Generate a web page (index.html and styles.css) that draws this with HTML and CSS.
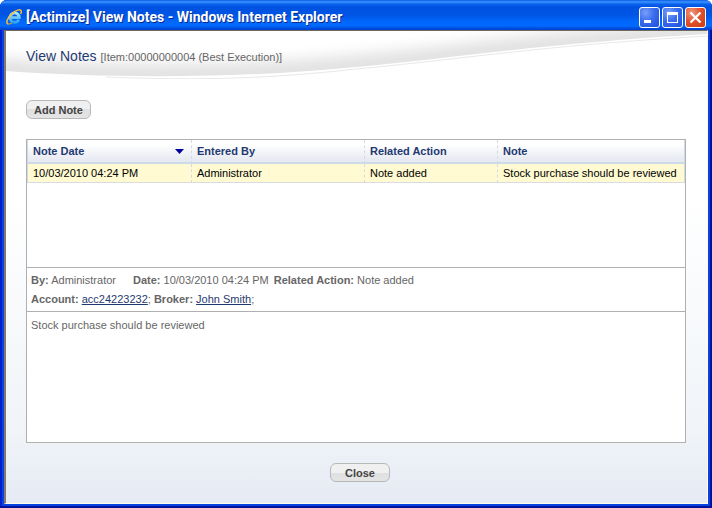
FILE: index.html
```html
<!DOCTYPE html>
<html lang="en">
<head>
<meta charset="utf-8">
<title>[Actimize] View Notes</title>
<link rel="stylesheet" href="styles.css">
</head>
<body>
<div class="window">
  <header class="titlebar">
    <svg class="app-icon" viewBox="0 0 16 16" aria-hidden="true">
      <defs>
        <linearGradient id="e" x1="0" y1="0" x2="0" y2="1"><stop offset="0" stop-color="#a8e8ff"/><stop offset="1" stop-color="#2ba3ee"/></linearGradient>
      </defs>
      <path d="M12.800 10.800A4.700 4.700 0 1 1 13.300 8.600H5" fill="none" stroke="url(#e)" stroke-width="2.800"/>
      <path d="M2.200 15C-.8 14 1.500 8.600 6 4.600 10 1 14.500-.2 15.200 1.800c.3.900 0 2-.6 3" fill="none" stroke="#f6bd3c" stroke-width="1.500"/>
      <path d="M2.200 15c1 .2 2.300-.2 3.600-1" fill="none" stroke="#d99c25" stroke-width="1.300"/>
    </svg>
    <h1 class="caption">[Actimize] View Notes - Windows Internet Explorer</h1>
    <div class="controls">
      <button class="ctl" aria-label="Minimize"><svg viewBox="0 0 21 21"><path d="M5 13h7v3H5z" fill="#fff"/></svg></button>
      <button class="ctl" aria-label="Maximize"><svg viewBox="0 0 21 21"><path d="M5 5h11v11H5zM6 8v7h9V8z" fill="#fff" fill-rule="evenodd"/></svg></button>
      <button class="ctl ctl-close" aria-label="Close window"><svg viewBox="0 0 21 21"><path d="M5.500 5.500l10 10M15.500 5.500l-10 10" stroke="#fff" stroke-width="2.300"/></svg></button>
    </div>
  </header>
  <main class="page">
    <svg class="swoosh" viewBox="0 0 701 48" preserveAspectRatio="none" aria-hidden="true">
      <defs>
        <clipPath id="c"><path d="M0 0V40C100 47 230 48 350 36C450 27 530 13 701 3V0z"/></clipPath>
        <filter id="b" filterUnits="userSpaceOnUse" x="-40" y="-40" width="790" height="130"><feGaussianBlur stdDeviation="7"/></filter>
      </defs>
      <g clip-path="url(#c)"><path d="M-60 36L0 40C100 47 230 48 350 36C450 27 530 13 701 3L760 0" fill="none" stroke="#e2e2e2" stroke-width="25" filter="url(#b)"/></g>
      <path d="M100 46C200 50 270 47 350 38C450 29 530 15 701 5" fill="none" stroke="#e8e8e8"/>
    </svg>
    <div class="heading">
      <h2>View Notes</h2>
      <span class="item">[Item:00000000004 (Best Execution)]</span>
    </div>
    <div><button class="btn">Add Note</button></div>
    <section class="panel">
      <div class="list">
        <table>
          <colgroup><col class="c-date"><col class="c-by"><col class="c-action"><col></colgroup>
          <thead><tr><th><div class="sorted">Note Date<svg class="arrow" viewBox="0 0 9 5" aria-hidden="true"><path d="M0 0h9L4.500 5z" fill="#00009c"/></svg></div></th><th>Entered By</th><th>Related Action</th><th>Note</th></tr></thead>
          <tbody><tr><td>10/03/2010 04:24 PM</td><td>Administrator</td><td>Note added</td><td>Stock purchase should be reviewed</td></tr></tbody>
        </table>
      </div>
      <div class="details">
        <p class="meta"><span class="by"><b>By:</b> Administrator</span><span class="date"><b>Date:</b> 10/03/2010 04:24 PM</span><span><b>Related Action:</b> Note added</span></p>
        <p><b>Account:</b> <a href="#">acc24223232</a>; <b>Broker:</b> <a href="#">John Smith</a>;</p>
      </div>
      <div class="body">Stock purchase should be reviewed</div>
    </section>
    <footer><button class="btn btn-close">Close</button></footer>
  </main>
</div>
</body>
</html>
```
FILE: styles.css
```css
* { box-sizing: border-box; }
body { margin: 0; background: #fff; font: 11px/14px "Liberation Sans", Arial, sans-serif; }
h1, h2, p { margin: 0; }
button { font: inherit; padding: 0; }

.window {
  min-height: 100vh;
  display: flex;
  flex-direction: column;
  padding: 0 4px 4px;
  border-radius: 7px 7px 0 0;
  overflow: hidden;
  background: #0842e0;
  box-shadow: inset -2px -2px 0 #00129c, inset 2px 0 0 #0020d0;
}
.titlebar {
  display: flex;
  align-items: center;
  height: 30px;
  margin: 0 -4px;
  padding: 4px 6px 0;
  background: linear-gradient(#0a5ae8 0, #3c96ff 2px, #0a62ee 4px, #0052e0 7px, #0055e5 15px, #0068fc 22px, #006aff 26px, #0050e0 28px, #003dd0 30px);
}
.app-icon { width: 16px; height: 16px; margin-right: 4px; }
.caption {
  flex: 1;
  color: #fff;
  font: bold 14px/18px Roboto, "Trebuchet MS", sans-serif;
  text-shadow: 1px 1px 0 #0a2a90;
  white-space: nowrap;
}
.controls { display: flex; gap: 2px; }
.ctl {
  width: 21px;
  height: 21px;
  border: 1px solid #fff;
  border-radius: 3px;
  background: radial-gradient(circle at 30% 25%, #7aa0f8, #3a6cee 45%, #1c50dc);
}
.ctl svg { display: block; width: 21px; height: 21px; margin: -1px; }
.ctl-close { background: radial-gradient(circle at 30% 25%, #f09a80, #e2532e 45%, #c83c10); }

.page {
  position: relative;
  flex: 1;
  display: flex;
  flex-direction: column;
  padding: 15px 21px 21px 20px;
  border: solid #fffbe8;
  border-width: 1px 1px 1px 2px;
  border-top-color: #6e6a5c;
  border-left-color: #807a6c;
  background: linear-gradient(#fff 35%, #f0f4f8 85%, #e5eaf4);
}
.swoosh { position: absolute; top: 0; left: 0; width: 100%; height: 48px; }
.heading { position: relative; display: flex; align-items: baseline; gap: 4px; margin-bottom: 34px; color: #666; }
.heading h2 { color: #1f3a70; font-size: 14px; line-height: 20px; font-weight: normal; }

.btn {
  height: 19px;
  padding: 0 7px;
  border: 1px solid #b8b8b8;
  border-radius: 6px;
  background: linear-gradient(#f0f0f0 50%, #e0e0e0 50%, #e4e4e4);
  color: #444;
  font-size: 11px;
  font-weight: bold;
  line-height: 16px;
}
.btn-close { padding: 0 14px; }

.panel {
  flex: 1;
  display: flex;
  flex-direction: column;
  margin-top: 20px;
  border: 1px solid #b0b0b0;
  background: #fff;
}
.list { min-height: 127px; }
table { width: 100%; table-layout: fixed; border-collapse: separate; border-spacing: 0; border: 1px solid #cddaea; border-top: 0; border-bottom: 0; }
.c-date { width: 164px; }
.c-by { width: 173px; }
.c-action { width: 133px; }
th, td { padding: 0 5px; text-align: left; border-right: 1px dashed #d5d9e6; }
th:last-child, td:last-child { border-right: 0; }
th { height: 24px; color: #1f3a70; background: linear-gradient(#fff 20%, #e8eaf2 90%); border-bottom: 2px solid #cddaea; }
td { height: 19px; color: #000; background: #fffad2; border-bottom: 1px solid #d8dce0; }
.sorted { display: flex; justify-content: space-between; align-items: center; padding-right: 2px; }
.arrow { width: 9px; height: 5px; }

.details, .body { border-top: 1px solid #b0b0b0; padding: 6px 4px; color: #666; }
.details { height: 44px; padding-top: 3px; line-height: 19px; }
.meta { display: flex; }
.by { margin-right: 17px; }
.date { margin-right: 5px; }
.details a { color: #1f3a70; }
.body { flex: 1; }
footer { margin-top: 20px; padding-left: 8px; text-align: center; line-height: 0; }
```
